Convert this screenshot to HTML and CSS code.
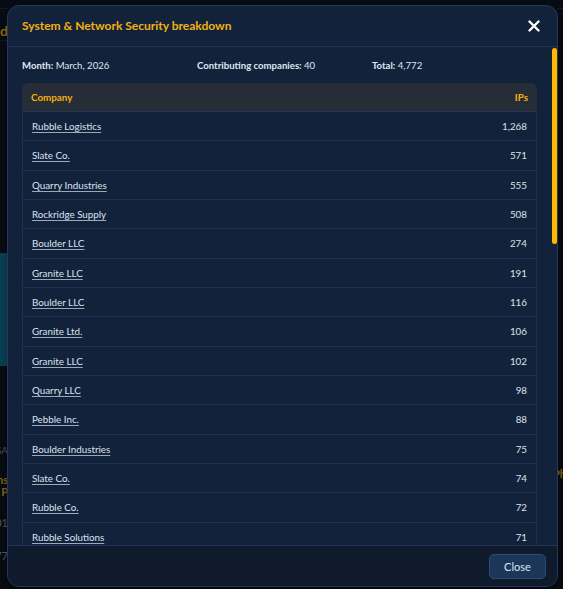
FILE: index.html
```html
<!DOCTYPE html>
<html lang="en">
<head>
<meta charset="utf-8">
<title>System &amp; Network Security breakdown</title>
<link rel="stylesheet" href="styles.css">
</head>
<body>
<div class="page">
  <div class="strip strip-left">
    <div class="bg-line bg-top"></div>
    <div class="bg-title">Incident trend</div>
    <div class="bg-line"></div>
    <div class="bg-gap1"></div>
    <div class="bg-teal"></div>
    <div class="bg-gap2"></div>
    <div class="bg-label">CATEGORIES USA</div>
    <div class="bg-orange">Systems<br>App P</div>
    <div class="bg-num">2,01</div>
    <div class="bg-num">4,77</div>
  </div>
  <div class="page-main"></div>
  <div class="strip strip-right">
    <div class="bg-line bg-top"></div>
    <div class="bg-gap3"></div>
    <div class="bg-orange-r">Physi</div>
  </div>
</div>

<div class="modal" role="dialog" aria-labelledby="modal-title">
  <div class="modal-header">
    <h2 id="modal-title" class="modal-title">System &amp; Network Security breakdown</h2>
    <button class="modal-x" aria-label="Close">
      <svg width="12" height="12" viewBox="0 0 12 12"><path d="M1.5 1.5 L10.5 10.5 M10.5 1.5 L1.5 10.5" stroke="#ffffff" stroke-width="2.4" stroke-linecap="round"/></svg>
    </button>
  </div>
  <div class="modal-body">
    <div class="meta">
      <div class="meta-item"><b>Month:</b> March, 2026</div>
      <div class="meta-item"><b>Contributing companies:</b> 40</div>
      <div class="meta-item"><b>Total:</b> 4,772</div>
    </div>
    <table class="breakdown">
      <thead>
        <tr><th class="c-name">Company</th><th class="c-num">IPs</th></tr>
      </thead>
      <tbody>
        <tr><td class="c-name"><a href="#">Rubble Logistics</a></td><td class="c-num">1,268</td></tr>
        <tr><td class="c-name"><a href="#">Slate Co.</a></td><td class="c-num">571</td></tr>
        <tr><td class="c-name"><a href="#">Quarry Industries</a></td><td class="c-num">555</td></tr>
        <tr><td class="c-name"><a href="#">Rockridge Supply</a></td><td class="c-num">508</td></tr>
        <tr><td class="c-name"><a href="#">Boulder LLC</a></td><td class="c-num">274</td></tr>
        <tr><td class="c-name"><a href="#">Granite LLC</a></td><td class="c-num">191</td></tr>
        <tr><td class="c-name"><a href="#">Boulder LLC</a></td><td class="c-num">116</td></tr>
        <tr><td class="c-name"><a href="#">Granite Ltd.</a></td><td class="c-num">106</td></tr>
        <tr><td class="c-name"><a href="#">Granite LLC</a></td><td class="c-num">102</td></tr>
        <tr><td class="c-name"><a href="#">Quarry LLC</a></td><td class="c-num">98</td></tr>
        <tr><td class="c-name"><a href="#">Pebble Inc.</a></td><td class="c-num">88</td></tr>
        <tr><td class="c-name"><a href="#">Boulder Industries</a></td><td class="c-num">75</td></tr>
        <tr><td class="c-name"><a href="#">Slate Co.</a></td><td class="c-num">74</td></tr>
        <tr><td class="c-name"><a href="#">Rubble Co.</a></td><td class="c-num">72</td></tr>
        <tr><td class="c-name"><a href="#">Rubble Solutions</a></td><td class="c-num">71</td></tr>
        <tr><td class="c-name"><a href="#">Pebble Supply</a></td><td class="c-num">67</td></tr>
        <tr><td class="c-name"><a href="#">Cobble Group</a></td><td class="c-num">65</td></tr>
        <tr><td class="c-name"><a href="#">Flint Systems</a></td><td class="c-num">60</td></tr>
        <tr><td class="c-name"><a href="#">Basalt Ltd.</a></td><td class="c-num">52</td></tr>
        <tr><td class="c-name"><a href="#">Shale Partners</a></td><td class="c-num">45</td></tr>
        <tr><td class="c-name"><a href="#">Gravel Inc.</a></td><td class="c-num">40</td></tr>
        <tr><td class="c-name"><a href="#">Marble Works</a></td><td class="c-num">36</td></tr>
        <tr><td class="c-name"><a href="#">Quarry Co.</a></td><td class="c-num">33</td></tr>
        <tr><td class="c-name"><a href="#">Slate Logistics</a></td><td class="c-num">30</td></tr>
        <tr><td class="c-name"><a href="#">Granite Solutions</a></td><td class="c-num">27</td></tr>
        <tr><td class="c-name"><a href="#">Boulder Co.</a></td><td class="c-num">24</td></tr>
        <tr><td class="c-name"><a href="#">Pebble LLC</a></td><td class="c-num">21</td></tr>
        <tr><td class="c-name"><a href="#">Rockridge Ltd.</a></td><td class="c-num">19</td></tr>
        <tr><td class="c-name"><a href="#">Cobble Inc.</a></td><td class="c-num">17</td></tr>
        <tr><td class="c-name"><a href="#">Flint Co.</a></td><td class="c-num">15</td></tr>
        <tr><td class="c-name"><a href="#">Basalt Industries</a></td><td class="c-num">12</td></tr>
        <tr><td class="c-name"><a href="#">Shale LLC</a></td><td class="c-num">10</td></tr>
        <tr><td class="c-name"><a href="#">Gravel Supply</a></td><td class="c-num">8</td></tr>
        <tr><td class="c-name"><a href="#">Marble Inc.</a></td><td class="c-num">6</td></tr>
        <tr><td class="c-name"><a href="#">Rubble Group</a></td><td class="c-num">5</td></tr>
        <tr><td class="c-name"><a href="#">Slate Systems</a></td><td class="c-num">4</td></tr>
        <tr><td class="c-name"><a href="#">Quarry Partners</a></td><td class="c-num">3</td></tr>
        <tr><td class="c-name"><a href="#">Granite Works</a></td><td class="c-num">2</td></tr>
        <tr><td class="c-name"><a href="#">Pebble Co.</a></td><td class="c-num">1</td></tr>
        <tr><td class="c-name"><a href="#">Boulder Supply</a></td><td class="c-num">1</td></tr>
      </tbody>
    </table>
    <div class="scroll-thumb"></div>
  </div>
  <div class="modal-footer">
    <button class="btn-close">Close</button>
  </div>
</div>
</body>
</html>
```

FILE: styles.css
```css
* { box-sizing: border-box; }

html, body {
  margin: 0;
  padding: 0;
  width: 563px;
  height: 589px;
  overflow: hidden;
  background: #080d15;
  font-family: "Lato", "Noto Sans", "Liberation Sans", sans-serif;
}

/* background page (dimmed, behind the modal) */
.page {
  display: flex;
  height: 589px;
}
.strip {
  width: 8px;
  display: flex;
  flex-direction: column;
  overflow: hidden;
  white-space: nowrap;
}
.strip-left { align-items: flex-end; }
.strip-right { align-items: flex-start; width: 6px; }
.page-main { flex: 1; }

.bg-line {
  height: 1px;
  width: 60px;
  background: #141c28;
  flex: none;
}
.bg-top { margin-top: 8px; }
.bg-title {
  margin-top: 13px;
  height: 18px;
  color: #a87a10;
  font-size: 14px;
  font-weight: 700;
  line-height: 18px;
}
.bg-gap1 { height: 212px; flex: none; }
.bg-teal {
  width: 8px;
  height: 113px;
  background: #0b4a5e;
  flex: none;
}
.bg-gap2 { height: 78px; flex: none; }
.bg-label {
  color: #4e5968;
  font-size: 10px;
  line-height: 12px;
  height: 12px;
}
.bg-orange {
  margin-top: 18px;
  color: #9c730f;
  font-size: 11px;
  font-weight: 700;
  line-height: 12px;
  text-align: right;
}
.bg-num {
  margin-top: 17px;
  color: #5a6472;
  font-size: 11px;
  line-height: 16px;
}
.bg-gap3 { height: 459px; flex: none; }
.bg-orange-r {
  color: #9c730f;
  font-size: 11px;
  font-weight: 700;
  line-height: 12px;
  margin-left: -4px;
}

/* modal */
.modal {
  position: absolute;
  left: 7px;
  top: 5px;
  width: 551px;
  height: 582px;
  background: #13223b;
  border: 1px solid #25375a;
  border-radius: 12px;
  display: flex;
  flex-direction: column;
  overflow: hidden;
  box-shadow: 0 4px 20px rgba(0,0,0,0.5);
}

.modal-header {
  height: 41px;
  flex: none;
  display: flex;
  align-items: center;
  justify-content: space-between;
  padding: 0 16px 0 14px;
  border-bottom: 1px solid #22345a;
}
.modal-title {
  margin: 0;
  color: #f2b10d;
  font-size: 12px;
  font-weight: 700;
  line-height: 16px;
}
.modal-x {
  background: none;
  border: 0;
  padding: 0;
  width: 14px;
  height: 14px;
  display: flex;
  align-items: center;
  justify-content: center;
  cursor: pointer;
}

.modal-body {
  flex: 1;
  position: relative;
  overflow: hidden;
  padding: 12px 20px 0 14px;
}

.meta {
  display: grid;
  grid-template-columns: 175px 175px auto;
  color: #dfe6f1;
  font-size: 9.6px;
  line-height: 14px;
  height: 14px;
}
.meta b { font-weight: 700; }

.breakdown {
  margin-top: 10px;
  width: 100%;
  border-collapse: separate;
  border-spacing: 0;
  font-size: 9.8px;
}
.breakdown th {
  background: #272d37;
  color: #f2b10d;
  font-weight: 700;
  height: 29px;
  padding: 0 9px;
  border-bottom: 1px solid #22345a;
}
.breakdown th:first-child { border-top-left-radius: 6px; }
.breakdown th:last-child { border-top-right-radius: 6px; }
.breakdown td {
  height: 29.33px;
  padding: 0 9px;
  border-bottom: 1px solid #1f3152;
  color: #dbe3ee;
}
.breakdown td:first-child { border-left: 1px solid #1f3152; }
.breakdown td:last-child { border-right: 1px solid #1f3152; }
.c-name { text-align: left; }
.c-num { text-align: right; }
.breakdown a {
  color: #dbe3ee;
  text-decoration: underline;
  text-decoration-color: #9aa8bc;
  text-underline-offset: 2px;
}

.scroll-thumb {
  position: absolute;
  right: 0;
  top: 1px;
  width: 5px;
  height: 196px;
  background: #ffb800;
  border-radius: 3px;
}

.modal-footer {
  height: 41px;
  flex: none;
  display: flex;
  align-items: center;
  justify-content: flex-end;
  padding: 0 11px;
  background: #0f1a2c;
  border-top: 1px solid #22345a;
}
.btn-close {
  width: 57px;
  height: 25px;
  background: #1b3659;
  border: 1px solid #2c4c74;
  border-radius: 5px;
  color: #dde5ef;
  font-family: inherit;
  font-size: 11px;
  padding: 0;
  cursor: pointer;
}
```
